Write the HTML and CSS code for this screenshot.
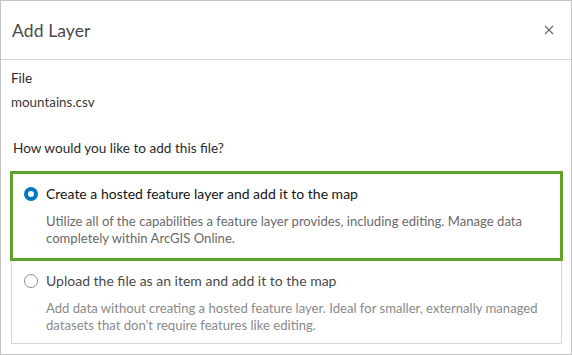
FILE: index.html
```html
<!DOCTYPE html>
<html>
<head>
<meta charset="utf-8">
<link rel="stylesheet" href="styles.css">
</head>
<body>
<div class="dialog">
  <div class="header">
    <div class="title">Add Layer</div>
    <svg class="close" width="10" height="10" viewBox="0 0 10 10"><path d="M1 1 L9 9 M9 1 L1 9" stroke="#6b6b6b" stroke-width="1.2" fill="none"/></svg>
  </div>
  <div class="content">
    <div class="label">File</div>
    <div class="filename">mountains.csv</div>
    <div class="question">How would you like to add this file?</div>
    <div class="card">
      <div class="item selected">
        <span class="radio checked"></span>
        <div class="text">
          <div class="opt">Create a hosted feature layer and add it to the map</div>
          <div class="desc">Utilize all of the capabilities a feature layer provides, including editing. Manage data completely within ArcGIS Online.</div>
        </div>
      </div>
      <div class="item second">
        <span class="radio"></span>
        <div class="text">
          <div class="opt">Upload the file as an item and add it to the map</div>
          <div class="desc">Add data without creating a hosted feature layer. Ideal for smaller, externally managed datasets that don’t require features like editing.</div>
        </div>
      </div>
    </div>
  </div>
</div>
</body>
</html>
```
FILE: styles.css
```css
html, body { margin: 0; padding: 0; background: #fff; }
body { font-family: "Lato", "Liberation Sans", sans-serif; }
.dialog {
  box-sizing: border-box;
  width: 572px;
  height: 355px;
  border: 1.5px solid #c4c4c4;
  background: #fff;
}
.header {
  height: 58px;
  border-bottom: 1px solid #d6d6d6;
  display: flex;
  align-items: center;
  justify-content: space-between;
  padding: 0 17px 0 11px;
}
.title { font-size: 17.5px; color: #4a4a4a; letter-spacing: 0.1px; }
.close { display: block; }
.content { padding: 8px 9px 0 10px; }
.label { font-size: 13.5px; line-height: 20px; color: #2b2b2b; }
.filename { font-size: 13.4px; line-height: 20px; color: #3a3a3a; margin-top: 4px; }
.question { font-size: 13.6px; line-height: 20px; color: #2b2b2b; margin-top: 26px; padding-left: 2px; }
.card { margin-top: 14px; border: 1px solid #d6d6d6; }
.item { display: flex; align-items: flex-start; padding: 12px 12px 12px 12px; gap: 8px; }
.item.selected { outline: 3px solid #5ea22b; outline-offset: -1px; position: relative; }
.item.second { border-top: 1px solid #d6d6d6; padding-top: 12px; padding-bottom: 9px; }
.radio {
  box-sizing: border-box;
  width: 14px; height: 14px; border-radius: 50%;
  border: 1px solid #8e8e8e; margin-top: 2px; flex: none; background: #fff;
}
.radio.checked { border: 4.5px solid #0079c1; }
.opt { font-size: 14px; line-height: 18px; color: #151515; }
.second .opt { color: #4a4a4a; }
.desc { font-size: 13.1px; line-height: 17px; color: #6a6a6a; margin-top: 10px; }
.second .desc { color: #8a8a8a; }
```
